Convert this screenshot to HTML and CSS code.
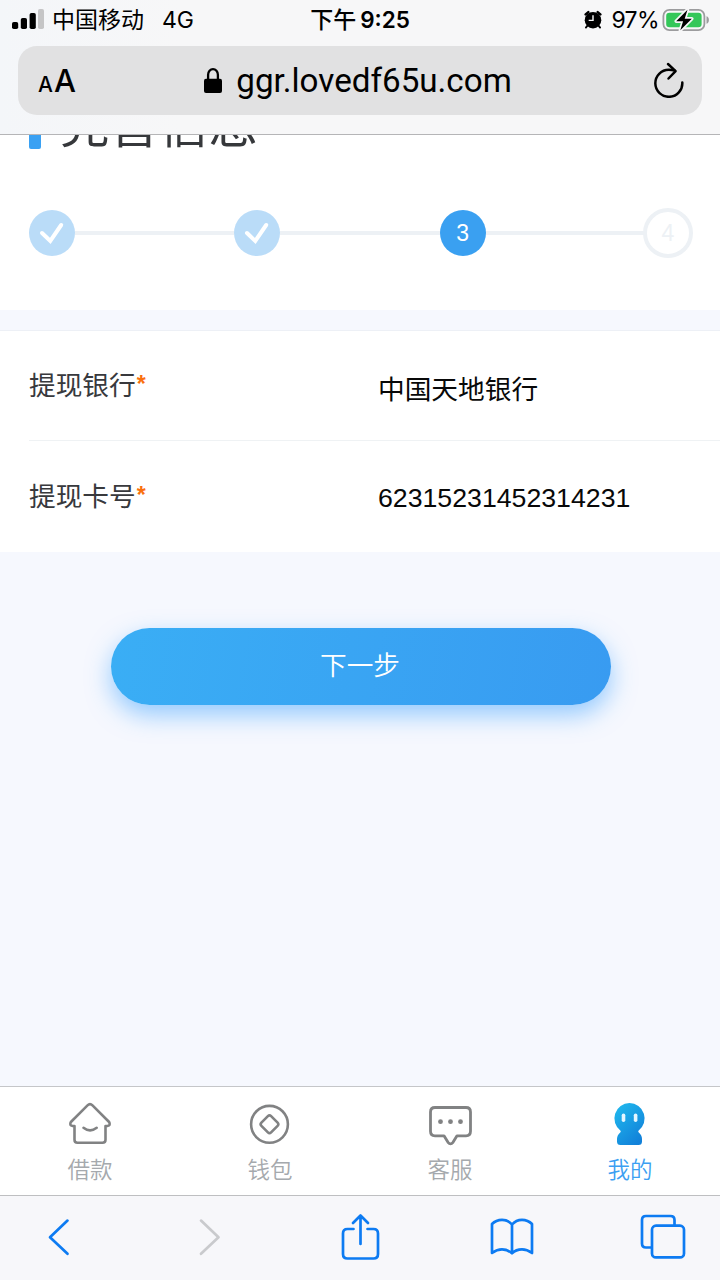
FILE: index.html
```html
<!DOCTYPE html>
<html lang="zh-CN">
<head>
<meta charset="utf-8">
<title>完善信息</title>
<link rel="stylesheet" href="styles.css">
</head>
<body>
<div class="screen">
  <header class="browser-top">
    <div class="status">
      <div class="status-left">
        <svg class="signal" width="32" height="21" viewBox="0 0 32 21"><rect x="0" y="13" width="6.2" height="7" rx="1.8"/><rect x="8.8" y="9" width="6.2" height="11" rx="1.8"/><rect x="17.6" y="4" width="6.2" height="16" rx="1.8"/><rect x="26" y="0" width="6" height="20" rx="1.8" fill="#c5c5c6"/></svg>
        <span class="carrier">中国移动</span>
        <span class="network">4G</span>
      </div>
      <div class="clock"><span class="clock-period">下午</span><span class="clock-time">9:25</span></div>
      <div class="status-right">
        <svg class="alarm" width="18" height="20" viewBox="0 0 20 21"><path d="M1.800 4.300 4.800 1.700M18.200 4.300 15.200 1.700" stroke="#000" stroke-width="2.700" stroke-linecap="round"/><path d="m3.600 17-1.500 2M16.400 17l1.500 2" stroke="#000" stroke-width="2" stroke-linecap="round"/><circle cx="10" cy="10.700" r="9.200"/><path d="M10 5.300v5.600H5.200" fill="none" stroke="#f7f7f8" stroke-width="1.600"/></svg>
        <span class="percent">97%</span>
        <svg class="battery" width="48" height="24" viewBox="0 0 48 24"><rect x="1.4" y="1.9" width="41" height="20.2" rx="6" fill="none" stroke="#9c9c9e" stroke-width="1.8"/><rect x="4.2" y="4.7" width="35.4" height="14.6" rx="3.3" fill="#34c759"/><path d="M44.5 8.2c1.8.6 2.4 2 2.4 3.8s-.6 3.2-2.4 3.8z" fill="#9c9c9e"/><path d="M25.5 1.7 14.2 13.2h6.9L18.3 22.3 29.8 10.8h-7.1z" fill="#000" stroke="#f7f7f8" stroke-width="3.4" stroke-linejoin="round" paint-order="stroke"/></svg>
      </div>
    </div>
    <div class="address">
      <div class="text-size"><span class="small-a">A</span><span class="large-a">A</span></div>
      <div class="domain">
        <svg width="18" height="25" viewBox="0 0 18 25"><path d="M4.1 12V6.8a4.9 5.6 0 0 1 9.8 0V12" fill="none" stroke="#000" stroke-width="2.3"/><rect x="0" y="10.8" width="18" height="14.2" rx="2"/></svg>
        <span class="url">ggr.lovedf65u.com</span>
      </div>
      <svg class="reload" width="32" height="36" viewBox="0 0 32 36" fill="none" stroke="#000" stroke-width="2.500" stroke-linecap="round" stroke-linejoin="round"><path d="M29.300 20.500A13.500 13.500 0 1 1 15.800 7.800q3 0 6 .8"/><path d="m15 2 7.600 7.100-7.100 7.400"/></svg>
    </div>
  </header>

  <main class="page">
    <section class="progress">
      <div class="heading">
        <i class="accent"></i>
        <h1 class="title">完善信息</h1>
      </div>
      <div class="steps">
        <span class="step done"><svg width="26" height="24" viewBox="0 0 26 24"><path d="m3 12 8.300 8L22.200 4" fill="none" stroke="#fff" stroke-width="4" stroke-linecap="round"/></svg></span>
        <i class="line"></i>
        <span class="step done"><svg width="26" height="24" viewBox="0 0 26 24"><path d="m3 12 8.300 8L22.200 4" fill="none" stroke="#fff" stroke-width="4" stroke-linecap="round"/></svg></span>
        <i class="line"></i>
        <span class="step current">3</span>
        <i class="line"></i>
        <span class="step pending">4</span>
      </div>
    </section>
    <section class="form">
      <div class="row">
        <span class="label">提现银行<b class="required">*</b></span>
        <span class="value bank">中国天地银行</span>
      </div>
      <div class="row">
        <span class="label">提现卡号<b class="required">*</b></span>
        <span class="value card">62315231452314231</span>
      </div>
    </section>
    <button class="next" type="button">下一步</button>
  </main>

  <nav class="tabs">
    <a class="tab"><svg width="46" height="46" viewBox="0 0 46 46" fill="none" stroke="#818283" stroke-width="2.6" stroke-linejoin="round" stroke-linecap="round"><path d="M7.500 26v13.800q0 3 3 3h25q3 0 3-3V26h1.800q3.800-.6 1.800-4L25.500 5.400q-2.500-2.400-5 0L3.900 22q-2 3.400 1.800 4z"/><path d="M16.500 27.800q6.500 5.200 13.200 0"/></svg><span>借款</span></a>
    <a class="tab"><svg width="46" height="46" viewBox="0 0 46 46" fill="none" stroke="#818283" stroke-width="2.6" stroke-linejoin="round"><circle cx="22.500" cy="24.300" r="18.400"/><path d="M20.900 16.200q1.600-1.600 3.200 0l6.500 6.500q1.600 1.600 0 3.200l-6.500 6.500q-1.600 1.600-3.200 0l-6.500-6.500q-1.600-1.600 0-3.200z"/></svg><span>钱包</span></a>
    <a class="tab"><svg width="46" height="46" viewBox="0 0 46 46" fill="none" stroke="#818283" stroke-width="2.8" stroke-linejoin="round"><path d="M8 7.500h31q4.500 0 4.500 4.500v19.300q0 4.500-4.500 4.500H30l-4 6.500q-2.500 3-5 0l-4-6.500H8q-4.500 0-4.500-4.500V12q0-4.500 4.500-4.500z"/><g fill="#818283" stroke="none"><circle cx="13.500" cy="21.700" r="2.400"/><circle cx="23.500" cy="21.700" r="2.400"/><circle cx="33.500" cy="21.700" r="2.400"/></g></svg><span>客服</span></a>
    <a class="tab active"><svg width="46" height="46" viewBox="0 0 46 46"><defs><linearGradient id="person" x1="0" y1="0" x2=".7" y2="1"><stop offset="0" stop-color="#20bcef"/><stop offset="1" stop-color="#1281d9"/></linearGradient></defs><path d="M22.500 3a15.400 15.400 0 0 1 9 27.700q-.7.9.3 1.800Q35 35.200 35 39v2.500q0 3.500-3.500 3.500h-18q-3.500 0-3.500-3.500V39q0-3.800 3.200-6.500 1-.9.3-1.800A15.400 15.400 0 0 1 22.500 3z" fill="url(#person)"/><rect x="14.700" y="13.500" width="3.600" height="8.500" rx="1.800" fill="#e4f6ff"/><rect x="26.800" y="13.500" width="3.600" height="8.500" rx="1.800" fill="#e4f6ff"/></svg><span>我的</span></a>
  </nav>

  <footer class="toolbar">
    <svg width="46" height="38" viewBox="0 0 24 38"><path d="M20.500 2.600 3 19.300l17.500 16.500"/></svg>
    <svg class="disabled" width="46" height="38" viewBox="0 0 24 38"><path d="M3 2.600 20.500 19.300 3 35.800"/></svg>
    <svg width="46" height="48" viewBox="0 0 40 48"><path d="M12.500 16H6.500q-4.500 0-4.500 4.500V41q0 4.500 4.500 4.500h26q4.500 0 4.500-4.500V20.500q0-4.500-4.500-4.500h-6M19.500 31V2.500M12 10l7.500-7.500L27 10"/></svg>
    <svg width="46" height="40" viewBox="0 0 44 40"><path d="M22 7.500Q18 2.800 12 2.800 6 2.800 2 7v29q5-3.600 10-3.600 6 0 10 4 4-4 10-4 5 0 10 3.600V7q-4-4.200-10-4.200-6 0-10 4.700v28.500"/></svg>
    <svg width="46" height="46" viewBox="0 0 46 46"><path d="M11 33.500H6q-4 0-4-4V6q0-4 4-4h24.500q4 0 4 4v5.500"/><rect x="12" y="11.700" width="32" height="31.700" rx="4"/></svg>
  </footer>
</div>
</body>
</html>
```
FILE: styles.css
```css
* { box-sizing: border-box; }

body {
  margin: 0;
  font-family: "Liberation Sans", "Noto Sans CJK SC", sans-serif;
  color: #000;
}

svg { display: block; flex: none; }

.screen {
  width: 720px;
  height: 1280px;
  display: flex;
  flex-direction: column;
  overflow: hidden;
  background: #f6f8fe;
}

/* Browser header */
.browser-top {
  height: 135px;
  flex: none;
  background: linear-gradient(90deg, #f4f6f9, #f7f7f8 25%, #f7f7f8);
  border-bottom: 1px solid #b5b5b7;
}

.status {
  height: 46px;
  padding: 0 10px 7px 12px;
  display: grid;
  grid-template-columns: 1fr auto 1fr;
  align-items: center;
  font-size: 23px;
  line-height: 30px;
  white-space: nowrap;
}

.status-left, .status-right, .clock { display: flex; align-items: center; }
.status-right { justify-content: flex-end; }
.signal { margin-top: -1px; }
.carrier { margin-left: 8px; }
.network { margin-left: 18px; font-family: Inter, sans-serif; }
.clock { font-weight: 500; margin-left: -2px; }
.clock-period { font-size: 23px; }
.clock-time { margin-left: 4px; font: 600 22.500px/30px Inter, sans-serif; }
.percent { margin: 0 3px 0 9px; font: 400 23px/30px Inter, sans-serif; letter-spacing: -0.600px; }

.address {
  height: 69px;
  margin: 0 18px;
  padding: 0 17px 0 20px;
  border-radius: 19px;
  background: #e1e1e2;
  display: grid;
  grid-template-columns: 1fr auto 1fr;
  align-items: center;
}

.text-size { padding-top: 6px; font-family: Inter, sans-serif; font-weight: 500; line-height: 40px; }
.small-a { font-size: 21px; }
.large-a { font-size: 31px; margin-left: 1px; }
.domain { display: flex; align-items: center; gap: 14px; padding-right: 7px; }
.url { font: 400 33.200px/40px Roboto, sans-serif; }
.reload { justify-self: end; margin-top: -2px; }

/* Page content */
.page { flex: 1; }

.progress {
  height: 175px;
  padding: 0 27px 0 29px;
  background: #fff;
  overflow: hidden;
}

.heading {
  height: 60px;
  margin: -41px 0 54px;
  display: flex;
  align-items: center;
  gap: 19px;
}

.accent {
  width: 12px;
  height: 49px;
  border-radius: 2px;
  background: #3aa1f3;
}

.title {
  margin: 0;
  padding-top: 4px;
  color: #36383b;
  font-size: 49.500px;
  line-height: 64px;
  font-weight: 400;
}

.steps { display: flex; align-items: center; height: 50px; }
.line { flex: 1; height: 4px; background: #edf1f5; }

.step {
  width: 46px;
  height: 46px;
  flex: none;
  border-radius: 50%;
  display: flex;
  align-items: center;
  justify-content: center;
  font-size: 23px;
}

.done { background: #badcf8; }
.current { background: #3aa0f1; color: #fff; }
.pending { width: 50px; height: 50px; margin-left: -2px; border: 4px solid #edf1f5; background: #fff; color: #edf1f5; }

.form {
  margin-top: 20px;
  padding-left: 29px;
  border-top: 1px solid #edf0f6;
  background: #fff;
  font-size: 26.7px;
  line-height: 40px;
}

.row {
  height: 111px;
  display: grid;
  grid-template-columns: 349px 1fr;
  align-items: center;
}

.row:first-child { height: 110px; border-bottom: 1px solid #eff2f4; }
.label { color: #38393d; }
.required { margin-left: 1px; color: #f9700e; font-size: 23px; font-weight: 700; line-height: 20px; vertical-align: 3px; }
.value { color: #080808; padding-top: 8px; }
.card { padding-top: 3px; }

.next {
  display: block;
  width: 500px;
  height: 77px;
  margin: 76px 0 0 111px;
  padding: 0 2px 6px 0;
  border: 0;
  border-radius: 39px;
  background: linear-gradient(100deg, #3aaef5, #389bf1);
  box-shadow: 0 10px 24px rgba(58, 160, 255, 0.52);
  color: #fff;
  font: 350 26.700px/40px "Noto Sans CJK SC DemiLight", "Noto Sans CJK SC", sans-serif;
}

/* Site tabs */
.tabs {
  height: 109px;
  flex: none;
  display: grid;
  grid-template-columns: repeat(4, 1fr);
  border-top: 1px solid #c5c6c9;
  background: #fff;
}

.tab {
  padding-top: 13px;
  display: flex;
  flex-direction: column;
  align-items: center;
  gap: 6px;
  color: #a5a9ad;
  font: 350 22.500px/32px "Noto Sans CJK SC DemiLight", "Noto Sans CJK SC", sans-serif;
}

.active { color: #3c9ff2; }

/* Browser footer */
.toolbar {
  height: 85px;
  flex: none;
  padding: 0 34px 2px 36px;
  display: flex;
  align-items: center;
  justify-content: space-between;
  border-top: 1px solid #bebfc1;
  background: #f7f7fa;
  fill: none;
  stroke: #0d7bf2;
  stroke-width: 2.700;
  stroke-linecap: round;
  stroke-linejoin: round;
}

.disabled { stroke: #c9cacd; }
```
